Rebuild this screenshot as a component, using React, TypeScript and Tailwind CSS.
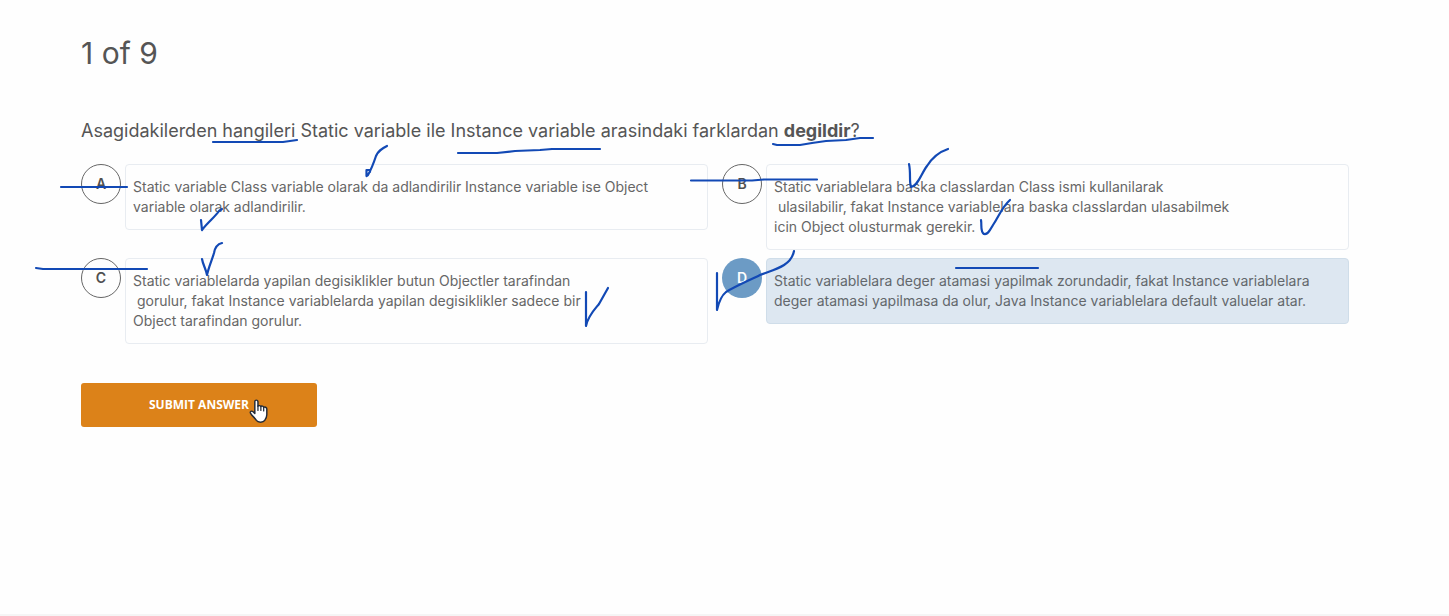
import { useState } from "react";

type Option = { id: string; text: string };

const OPTIONS: Option[] = [
  {
    id: "A",
    text: "Static variable Class variable olarak da adlandirilir Instance variable ise Object\nvariable olarak adlandirilir.",
  },
  {
    id: "B",
    text: "Static variablelara baska classlardan Class ismi kullanilarak\n ulasilabilir, fakat Instance variablelara baska classlardan ulasabilmek\nicin Object olusturmak gerekir.",
  },
  {
    id: "C",
    text: "Static variablelarda yapilan degisiklikler butun Objectler tarafindan\n gorulur, fakat Instance variablelarda yapilan degisiklikler sadece bir\nObject tarafindan gorulur.",
  },
  {
    id: "D",
    text: "Static variablelara deger atamasi yapilmak zorundadir, fakat Instance variablelara\ndeger atamasi yapilmasa da olur, Java Instance variablelara default valuelar atar.",
  },
];

const INK_STROKES = [
  // underlines in the question
  "M213 142H283L290 141L297 140",
  "M458 153H497L515 151L540 150L552 149H600",
  "M773 144L777 145H800L812 143L826 141L846 140L860 138H873",
  // lines through the letters
  "M61 187H127",
  "M691 180.500H752L764 179.500H817",
  "M36 268L43 269H147",
  "M956 268H1038",
  // ticks
  "M387 146C381 149 378 151 376 156C374 162 372 168 368 175L366.500 176V170H370V172",
  "M222 209L219 211C215 217 208 222 202 230L201 220",
  "M222 243C218 244 215 247 214 253C212 260 209 266 207 275C206 269 203 265 202 259",
  "M586 292V326C588 316 594 310 599 304L608 288",
  "M948 149C939 152 932 158 927 166C921 174 918 186 911 187C909 182 911 173 909 164",
  "M1010 200C1002 207 999 216 993 225C990 230 988 235 984 234C980 231 982 226 981 220",
  "M717 273V310C719 301 721 296 726 292C736 286 748 281 760 275C772 270 791 267 794 251",
];

function OptionRow({
  option,
  selected,
  onSelect,
}: {
  option: Option;
  selected: boolean;
  onSelect: () => void;
}) {
  return (
    <label className="flex items-start gap-1 cursor-pointer">
      <input
        type="radio"
        name="answer"
        value={option.id}
        checked={selected}
        onChange={onSelect}
        className="sr-only"
      />
      <span
        className={
          selected
            ? "flex size-10 shrink-0 items-center justify-center rounded-full bg-[#6c9bc5] text-sm font-semibold text-white"
            : "flex size-10 shrink-0 items-center justify-center rounded-full border border-[#666666] text-sm font-semibold text-[#505050]"
        }
      >
        {option.id}
      </span>
      <span
        className={
          selected
            ? "min-w-0 flex-1 whitespace-pre-wrap rounded border border-[#cfdde9] bg-[#dde7f1] py-3 pl-[7px] text-sm leading-5 text-[#63676c]"
            : "min-w-0 flex-1 whitespace-pre-wrap rounded border border-[#e8ecf1] py-3 pl-[7px] text-sm leading-5 text-[#666666]"
        }
      >
        {option.text}
      </span>
    </label>
  );
}

function Ink() {
  return (
    <svg
      className="pointer-events-none absolute left-0 top-0"
      width="1449"
      height="616"
      viewBox="0 0 1449 616"
      fill="none"
      stroke="#1249b5"
      strokeWidth="2.200"
      strokeLinecap="round"
      strokeLinejoin="round"
      aria-hidden="true"
    >
      {INK_STROKES.map((d) => (
        <path key={d} d={d} />
      ))}
    </svg>
  );
}

function HandPointer() {
  return (
    <svg
      className="pointer-events-none absolute left-[168px] top-4"
      width="20"
      height="25"
      viewBox="0 0 19 24"
      aria-hidden="true"
    >
      <path
        d="M5.5 2.5C5.5 .6 8.300 .6 8.500 2.500V7C9 6 11 6.200 11.300 7.300C12 6.400 13.600 6.700 14 8C15 7.300 17 8 17 9.500V15C17 17.500 16 19 15 20.500C13.500 22.800 8.500 22.800 7 20.500C5.500 18 3 16.500 1.300 13.500C.6 12 2.500 11 3.800 12.200L5.500 14Z"
        fill="#fff"
        stroke="#222b38"
        strokeWidth="1.400"
        strokeLinejoin="round"
      />
      <path d="M8.500 6.500V11M11.300 7.500V11M14 8.200V11.500" stroke="#222b38" strokeWidth="1.200" strokeLinecap="round" />
    </svg>
  );
}

export default function App() {
  const [answer, setAnswer] = useState("D");

  return (
    <main className="relative min-h-screen overflow-hidden border-b-2 border-[#f5f5f5] bg-[#fefefe] pb-8 pl-[81px] pr-[100px] pt-[35px] font-['Inter',sans-serif] text-[#555555]">
      <h1 className="text-[30px] leading-9">1 of 9</h1>
      <form onSubmit={(e) => e.preventDefault()}>
        <fieldset>
          <legend className="pt-12 text-lg leading-6">
            Asagidakilerden hangileri Static variable ile Instance variable arasindaki farklardan{" "}
            <strong className="font-bold">degildir</strong>?
          </legend>
          <div className="grid grid-cols-2 items-start gap-x-[14px] gap-y-2 pt-[21px]">
            {OPTIONS.map((option) => (
              <OptionRow
                key={option.id}
                option={option}
                selected={answer === option.id}
                onSelect={() => setAnswer(option.id)}
              />
            ))}
          </div>
        </fieldset>
        <button
          type="submit"
          className="relative mt-[39px] h-11 w-[236px] rounded-[3px] bg-[#dc8219] font-['Open_Sans',sans-serif] text-xs font-bold text-white"
        >
          SUBMIT ANSWER
          <HandPointer />
        </button>
      </form>
      <Ink />
    </main>
  );
}
